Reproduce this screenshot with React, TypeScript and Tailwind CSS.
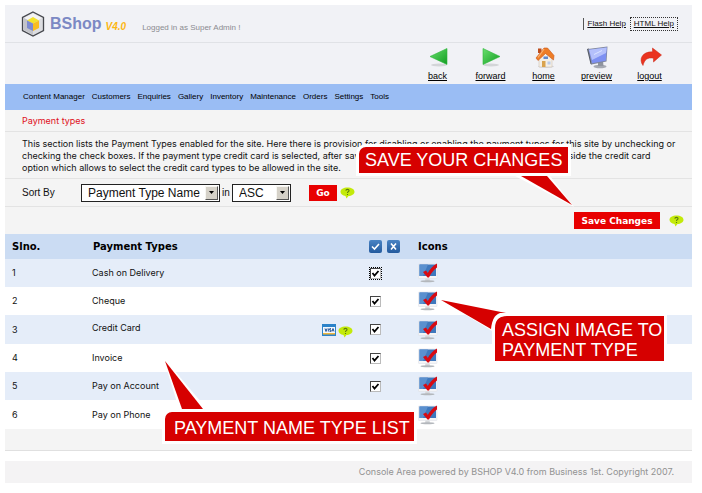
import { useState } from "react";
import type { ReactNode } from "react";

const menu = [
  "Content Manager",
  "Customers",
  "Enquiries",
  "Gallery",
  "Inventory",
  "Maintenance",
  "Orders",
  "Settings",
  "Tools",
];

const types = [
  "Cash on Delivery",
  "Cheque",
  "Credit Card",
  "Invoice",
  "Pay on Account",
  "Pay on Phone",
];

function Logo() {
  return (
    <svg className="h-[26px] w-6 shrink-0" viewBox="0 0 24 26" aria-hidden="true">
      <path d="M12 1 22.500 6.500V19.500L12 25 1.500 19.500V6.500Z" fill="#dcdde1" stroke="#45474d" strokeWidth="1.300" />
      <path d="M12 2.500 21 7 12 12 3 7Z" fill="#f3f3f5" />
      <path d="M3 7 12 12V24L3 19Z" fill="#c3c4ca" />
      <path d="M12 6 18 9.500 12 12.500 6 9.500Z" fill="#f3e32c" />
      <path d="M6 9.500 12 12.500V20L6 17Z" fill="#7d8bd0" />
      <path d="M18 9.500 12 12.500V20L18 17Z" fill="#f9bd20" />
    </svg>
  );
}

function BackIcon() {
  return (
    <svg className="h-6 w-6" viewBox="0 0 24 24" aria-hidden="true">
      <defs>
        <linearGradient id="greenFill" x1="0" y1="0" x2="1" y2="1">
          <stop offset="0" stopColor="#69e06d" />
          <stop offset="1" stopColor="#129c22" />
        </linearGradient>
      </defs>
      <ellipse cx="13" cy="20" rx="8" ry="1.500" fill="#d3d5d8" />
      <path d="M4 11.500 21 3.500V19.500Z" fill="url(#greenFill)" stroke="#2bb539" strokeWidth="0.600" />
    </svg>
  );
}

function ForwardIcon() {
  return (
    <svg className="h-6 w-6" viewBox="0 0 24 24" aria-hidden="true">
      <ellipse cx="12" cy="20" rx="8" ry="1.500" fill="#d3d5d8" />
      <path d="M21 11.500 4 3.500V19.500Z" fill="url(#greenFill)" stroke="#2bb539" strokeWidth="0.600" />
    </svg>
  );
}

function HomeIcon() {
  return (
    <svg className="h-6 w-6" viewBox="0 0 24 24" aria-hidden="true">
      <ellipse cx="14" cy="21.500" rx="8" ry="1.500" fill="#d6d7dc" />
      <path d="M7 12 13 8 20 13V22H7Z" fill="#f4efe6" stroke="#c9bba8" strokeWidth="0.500" />
      <path d="M6 3.500H9.500V8H6Z" fill="#bd4d1c" />
      <path d="M12 3 15.500 3 22 10.500 21.500 15 13.500 8.500 6 15.500 4 13Z" fill="#ee7d27" stroke="#c95516" strokeWidth="0.600" />
      <path d="M12 4 6 12.500" stroke="#fbb270" strokeWidth="1.200" />
      <rect x="11.500" y="11.500" width="4.500" height="2.500" fill="#6088cf" />
      <rect x="10" y="16" width="3.500" height="6" fill="#d9a34e" />
      <rect x="15.500" y="16.500" width="3" height="3" fill="#b9cbe9" />
    </svg>
  );
}

function PreviewIcon() {
  return (
    <svg className="h-6 w-6" viewBox="0 0 24 24" aria-hidden="true">
      <ellipse cx="15" cy="21.500" rx="6.500" ry="1.800" fill="#a5a9b2" />
      <path d="M13 17 18 16 18.500 21H13Z" fill="#8f949f" />
      <path d="M2 4 4 3.500 7 19.500 5.500 19Z" fill="#4d5361" />
      <path d="M3 4 22.500 1.500 21.500 16.500 6.500 19.500Z" fill="#7f869b" />
      <path d="M4 4.800 21.800 2.500 20.800 15.800 7 18.300Z" fill="#7d90f2" />
      <path d="M4 4.800 21.800 2.500 21 8 7 15Z" fill="#b4c0fb" />
      <path d="M9 9.500 17 5.500" stroke="#dbe4ff" strokeWidth="1" />
    </svg>
  );
}

function LogoutIcon() {
  return (
    <svg className="h-6 w-6" viewBox="0 0 24 24" aria-hidden="true">
      <path d="M14.500 3 23.500 10 15.500 17V13.200C9.500 12.200 6.500 14.500 5 20.500 0.500 14.500 4 6.500 14.500 6.800Z" fill="#ea3420" stroke="#c92413" strokeWidth="0.500" />
    </svg>
  );
}

function HelpBubble() {
  return (
    <svg className="h-3 w-[15px] shrink-0" viewBox="0 0 15 12" role="img" aria-label="Help">
      <path d="M7.500 0.500C11.500 0.500 14.500 2.300 14.500 4.800S11.500 9 8.500 9L6.500 11.500 5.500 9C2.500 8.700 0.500 7 0.500 4.800 0.500 2.300 3.500 0.500 7.500 0.500Z" fill="#c3ea0a" />
      <path d="M5.800 3.600C6 2 9.200 2 9 3.700 8.900 4.700 7.500 4.700 7.500 5.900M7.500 6.900V7.900" fill="none" stroke="#5d7a10" strokeWidth="1.100" />
    </svg>
  );
}

function CardIcon() {
  return (
    <svg className="h-3 w-[14px] shrink-0" viewBox="0 0 14 12" role="img" aria-label="Card types">
      <rect width="14" height="12" fill="#2c83c9" />
      <rect x="1" y="3" width="12" height="6" fill="#f4f8fc" />
      <rect x="1" y="9" width="12" height="1.500" fill="#f0b63c" />
      <path d="M3 4.500 4 7.500 5 4.500M6.300 4.500V7.500M9 4.700H7.700V6H9V7.300H7.500M10 7.500 11 4.500 12 7.500" fill="none" stroke="#1f4f94" strokeWidth="1" />
    </svg>
  );
}

function ScreenIcon() {
  return (
    <svg className="h-5 w-5" viewBox="0 0 20 20" aria-hidden="true">
      <rect x="0.500" y="1" width="18.500" height="14.500" rx="0.500" fill="#f4f5f7" stroke="#dcdfe4" strokeWidth="0.500" />
      <rect x="1.500" y="1.500" width="16.500" height="11.500" fill="#3f78bd" />
      <path d="M1.500 1.500H10L5 13H1.500Z" fill="#5a90cf" />
      <path d="M7.500 15.500H11.500L12 18H7Z" fill="#d5d7da" />
      <ellipse cx="9.500" cy="18.300" rx="7" ry="1" fill="#b3b7bc" />
      <path d="M5 9 8 7.500 9.800 10C11.500 6.500 14.500 3 19 0.500V4.500C15.500 7 13 10.500 11 14.500H9.500Z" fill="#d80a12" />
    </svg>
  );
}

function Tool({ label, children }: { label: string; children: ReactNode }) {
  return (
    <a href="#" className="flex w-[53px] flex-col items-center text-[9px] leading-[10px] text-black underline">
      {children}
      <span className="mt-[2px]">{label}</span>
    </a>
  );
}

function Picker({ id, label, width, options }: { id: string; label: string; width: string; options: string[] }) {
  return (
    <div className={`relative h-[18px] ${width}`}>
      <select
        id={id}
        aria-label={label}
        className="h-full w-full appearance-none border border-[#222] bg-white pl-[6px] text-[12px] leading-4 text-[#111]"
      >
        {options.map((o) => (
          <option key={o}>{o}</option>
        ))}
      </select>
      <span className="pointer-events-none absolute top-[2px] right-[2px] flex h-[14px] w-[13px] items-center justify-center border border-[#f7f6f2] border-r-[#555] border-b-[#555] bg-[#d5d1c8]">
        <svg className="h-[3px] w-[5px]" viewBox="0 0 5 3" aria-hidden="true">
          <path d="M0 0H5L2.500 3Z" fill="#000" />
        </svg>
      </span>
    </div>
  );
}

function Tick({ name, focused }: { name: string; focused: boolean }) {
  const [on, setOn] = useState(true);
  return (
    <span className={`relative block h-[11px] w-[11px] outline-black ${focused ? "outline-1 outline-dotted" : ""}`}>
      <input
        type="checkbox"
        aria-label={`Enable ${name}`}
        checked={on}
        onChange={() => setOn(!on)}
        className="block h-[11px] w-[11px] appearance-none border border-[#bbb] border-t-[#444] border-l-[#444] bg-white"
      />
      {on && (
        <svg className="pointer-events-none absolute inset-0" viewBox="0 0 11 11" aria-hidden="true">
          <path d="M2.500 5 4.500 7.500 8.500 3" fill="none" stroke="#000" strokeWidth="1.800" />
        </svg>
      )}
    </span>
  );
}

function HeadButton({ label, path }: { label: string; path: string }) {
  return (
    <button type="button" aria-label={label} className="h-[13px] w-[13px] rounded-[2px] bg-linear-to-b from-[#4a84c4] to-[#235a9e]">
      <svg viewBox="0 0 13 13" aria-hidden="true">
        <path d={path} fill="none" stroke="#fff" strokeWidth="1.600" />
      </svg>
    </button>
  );
}

export default function App() {
  return (
    <div className="relative pt-[5px] pr-[10px] pl-[5px] font-['Liberation_Sans',Arial,sans-serif] text-[10px] leading-3 text-[#111]">
      <header>
        <div className="flex h-[38px] items-center border-b border-[#e0e2e6] bg-[#f1f2f6] pr-[14px] pl-4">
          <Logo />
          <span className="ml-[5px] text-[16px] leading-5 font-bold text-[#7c89c4]">BShop</span>
          <span className="mt-[6px] ml-1 font-bold text-[#fcb714] italic">V4.0</span>
          <span className="mt-2 ml-4 text-[8px] text-[#8b8b90]">Logged in as Super Admin !</span>
          <nav className="ml-auto flex items-center gap-1 text-[8px] underline">
            <a href="#" className="border-l border-[#555] pl-1">Flash Help</a>
            <a href="#" className="border border-dotted border-[#333] px-[3px]">HTML Help</a>
          </nav>
        </div>
        <div className="flex h-[41px] justify-end bg-[#f1f2f6] pt-[2px] pr-4">
          <Tool label="back"><BackIcon /></Tool>
          <Tool label="forward"><ForwardIcon /></Tool>
          <Tool label="home"><HomeIcon /></Tool>
          <Tool label="preview"><PreviewIcon /></Tool>
          <Tool label="logout"><LogoutIcon /></Tool>
        </div>
        <nav className="flex h-[26px] items-center gap-[7px] bg-[#9abdf4] pl-[18px] text-[8px] text-black">
          {menu.map((m) => (
            <a key={m} href="#">{m}</a>
          ))}
        </nav>
      </header>

      <main>
        <div className="bg-[#f4f4f4]">
          <h1 className="flex h-[22px] items-center border-b border-[#e3e3e3] pl-[17px] font-[Inter,sans-serif] text-[9px] text-[#e0101c]">Payment types</h1>
          <p className="h-[47px] overflow-hidden border-b border-[#e3e3e3] pt-[6px] pl-[17px] font-[Inter,sans-serif] text-[9px] whitespace-nowrap">
            This section lists the Payment Types enabled for the site. Here there is provision for disabling or enabling the payment types for this site by unchecking or
            <br />
            checking the check boxes. If the payment type credit card is selected, after saving the changes an icon will then be displayed beside the credit card
            <br />
            option which allows to select the credit card types to be allowed in the site.
          </p>
          <form className="flex h-[28px] items-center border-b border-[#e3e3e3] pl-[17px]" onSubmit={(e) => e.preventDefault()}>
            <label htmlFor="sort-field" className="w-[59px]">Sort By</label>
            <Picker id="sort-field" label="Sort By" width="w-[139px]" options={["Payment Type Name"]} />
            <label htmlFor="sort-order" className="w-3 text-center">in</label>
            <Picker id="sort-order" label="Sort order" width="w-[59px]" options={["ASC", "DESC"]} />
            <button type="submit" className="mr-[3px] ml-[18px] h-4 w-7 bg-[#e80000] font-['DejaVu_Sans',Verdana,sans-serif] text-[9px] font-bold text-white">Go</button>
            <HelpBubble />
          </form>
          <div className="flex h-[27px] items-center justify-end gap-[9px] pr-2">
            <button type="button" className="h-[17px] w-[86px] bg-[#e80000] font-['DejaVu_Sans',Verdana,sans-serif] text-[9px] font-bold text-white">Save Changes</button>
            <HelpBubble />
          </div>
        </div>

        <table className="w-full table-fixed border-collapse text-left">
          <colgroup>
            <col className="w-[80px]" />
            <col className="w-[278px]" />
            <col className="w-[48px]" />
            <col />
          </colgroup>
          <thead>
            <tr className="h-[25px] bg-[#cbdcf3] font-['DejaVu_Sans',Verdana,sans-serif] text-black">
              <th className="py-0 pl-[7px]">Slno.</th>
              <th className="py-0 pl-2">Payment Types</th>
              <th className="py-0 pl-[6px]">
                <span className="flex gap-[5px]">
                  <HeadButton label="Enable all" path="M3 6.500 5.500 9 10 4" />
                  <HeadButton label="Disable all" path="M4 3.500 9 9.500M9 3.500 4 9.500" />
                </span>
              </th>
              <th className="py-0 pl-[7px]">Icons</th>
            </tr>
          </thead>
          <tbody className="font-[Inter,sans-serif] text-[9px]">
            {types.map((t, i) => (
              <tr key={t} className="h-[28px] odd:bg-[#e5edf9] nth-[3n]:h-[29px]">
                <td className="py-0 pl-[7px]">{i + 1}</td>
                <td className="py-0 pr-[10px] pl-[7px]">
                  {t === "Credit Card" ? (
                    <span className="flex items-center">
                      <span className="mr-auto pb-1">{t}</span>
                      <CardIcon />
                      <span className="ml-[2px] pt-1"><HelpBubble /></span>
                    </span>
                  ) : (
                    t
                  )}
                </td>
                <td className="py-0 pl-[7px]"><Tick name={t} focused={i === 0} /></td>
                <td className="py-0 pl-[7px]">
                  <button type="button" aria-label={`Assign image to ${t}`} className="block">
                    <ScreenIcon />
                  </button>
                </td>
              </tr>
            ))}
          </tbody>
        </table>
        <div className="h-[22px] border-b border-[#e0e0e0] bg-[#f4f4f4]" />
      </main>

      <footer className="mt-[10px] mb-[10px] flex h-[22px] items-center justify-end bg-[#f4f3f4] pr-[18px] font-[Inter,sans-serif] text-[9px] text-[#929292]">
        Console Area powered by BSHOP V4.0 from Business 1st. Copyright 2007.
      </footer>

      <div className="absolute top-[144px] left-[356px] rounded-tl-[10px] border-3 border-white bg-[#d60000] px-[6px] pt-[3px] pb-[3px] text-[18px] leading-5 whitespace-nowrap text-white">
        SAVE YOUR CHANGES
        <svg className="absolute top-[26px] left-[156px] h-[36px] w-[62px]" viewBox="0 0 62 36" aria-hidden="true">
          <path d="M0 3 59 34 35 3Z" fill="#fff" />
          <path d="M6 3 57 32 32 3Z" fill="#d60000" />
        </svg>
      </div>
      <div className="absolute top-[313px] left-[492px] rounded-tl-[12px] border-3 border-white bg-[#d60000] pt-1 pr-[2px] pb-[1px] pl-[7px] text-[18px] leading-5 whitespace-nowrap text-white">
        <svg className="absolute top-[-19px] left-[-57px] h-[36px] w-[72px]" viewBox="0 0 72 36" aria-hidden="true">
          <path d="M0 1 72 16H62C56 18 54 25 54 34Z" fill="#fff" />
          <path d="M3 3 68 16H62C56 18 54 24 53 32Z" fill="#d60000" />
          <path d="M55.500 36V31Q55.500 17.500 69 17.500H72" fill="none" stroke="#fff" strokeWidth="3" />
        </svg>
        ASSIGN IMAGE TO
        <br />
        PAYMENT TYPE
      </div>
      <div className="absolute top-[409px] left-[162px] rounded-tl-[10px] border-3 border-white bg-[#d60000] pt-[6px] pr-1 pb-[3px] pl-[9px] text-[18px] leading-5 whitespace-nowrap text-white">
        PAYMENT NAME TYPE LIST
        <svg className="absolute top-[-55px] left-[-4px] h-[52px] w-[46px]" viewBox="0 0 46 52" aria-hidden="true">
          <path d="M2 0 18 52H46Z" fill="#fff" />
          <path d="M4 4 21 52H42Z" fill="#d60000" />
        </svg>
      </div>
    </div>
  );
}
